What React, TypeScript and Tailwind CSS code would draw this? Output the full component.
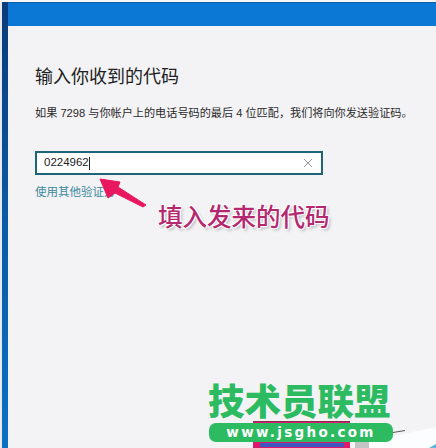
export default function App() {
  return (
    <div className="relative w-[436px] h-[448px] overflow-hidden flex flex-col bg-[#f3f2f5] font-['Liberation_Sans','Noto_Sans_CJK_SC',sans-serif]">
      <div className="h-[2px] bg-[#f6f6f6]" />
      <div className="flex flex-1">
        <div className="w-[2px] bg-[#e6e9ef]" />
        <div className="w-[6px] bg-gradient-to-b from-[#0a3a78] via-[#0a5ba8] to-[#0b70c2]" />
        <div className="flex flex-col flex-1 bg-[#f3f2f5]">
          <div className="h-px bg-[#0c5ea8]" />
          <div className="h-[23px] bg-[#0a78d4]" />
          <div className="flex flex-col pl-[27px] pt-[39px]">
            <h1 className="text-[18px] leading-[24px] text-[#222]">输入你收到的代码</h1>
            <p className="mt-[16px] text-[11.15px] leading-[16px] text-[#2b2b2b] whitespace-nowrap">
              如果 7298 与你帐户上的电话号码的最后 4 位匹配，我们将向你发送验证码。
            </p>
            <div className="mt-[30px] w-[288px] h-[24px] border-2 border-[#1d6478] bg-white flex items-center justify-between pl-[7px] pr-[8px]">
              <div className="flex items-center">
                <span className="text-[11.5px] text-[#222]">0224962</span>
                <span className="w-px h-[13px] bg-[#222]" />
              </div>
              <svg width="10" height="10" viewBox="0 0 10 10" fill="none" stroke="#8a8a8a" strokeWidth="0.9">
                <path d="M1 1 L9 9 M9 1 L1 9" />
              </svg>
            </div>
            <a className="mt-[9px] text-[11.5px] leading-[16px] text-[#3c8a9c]">使用其他验证方</a>
          </div>
        </div>
      </div>

      {/* arrow over the link */}
      <svg className="absolute left-[95px] top-[175px]" width="60" height="40" viewBox="0 0 60 40">
        <path d="M5 4 L25 7 L23 12 L51 30 L48 32 L20 18 L13 23 Z" fill="#e8175f" stroke="#e8175f" strokeWidth="1" strokeLinejoin="round" />
      </svg>

      <div className="absolute left-[158px] top-[201px] text-[24.5px] leading-[30px] font-medium text-[#b3286f] whitespace-nowrap font-['Noto_Sans_CJK_SC',sans-serif] [text-shadow:1px_1px_1px_#fff,-1px_-1px_1px_#fff,1px_-1px_1px_#fff,-1px_1px_1px_#fff,2px_2px_3px_#aaa]">
        填入发来的代码
      </div>

      {/* bottom right scrap of the page underneath */}
      <svg className="absolute left-[355px] top-[424px]" width="81" height="24" viewBox="0 0 81 24">
        <path d="M0 17 L14 17 L14 24 L0 24 Z" fill="#c4c4c4" />
        <path d="M14 17 L81 3 L81 24 L14 24 Z" fill="#fbfdfe" />
        <path d="M74 24 L81 20 L81 24 Z" fill="#5fb4de" />
        <path d="M38 8 L50 6 L50 7 L38 9 Z" fill="#555" />
      </svg>
      <div className="absolute left-[253px] top-[421px] w-[97px] h-[27px] bg-[#e0186c] border-t border-[#8a2a50] flex justify-center pt-[21px]">
        <div className="w-[84px] h-[4px] bg-[#3f55c0]" />
      </div>

      {/* watermark */}
      <div className="absolute left-[208px] top-[381px] text-[36.5px] leading-[38px] font-black text-[#2dbb62] whitespace-nowrap font-['Noto_Sans_CJK_SC',sans-serif]">
        技术员联盟
      </div>
      <div className="absolute left-[209px] top-[423px] w-[184px] h-[19px] rounded-[7px] bg-[#2dbb62] flex items-center justify-center text-[13.5px] font-bold tracking-[2.3px] text-white font-['DejaVu_Sans',sans-serif]">
        www.jsgho.com
      </div>
    </div>
  );
}
